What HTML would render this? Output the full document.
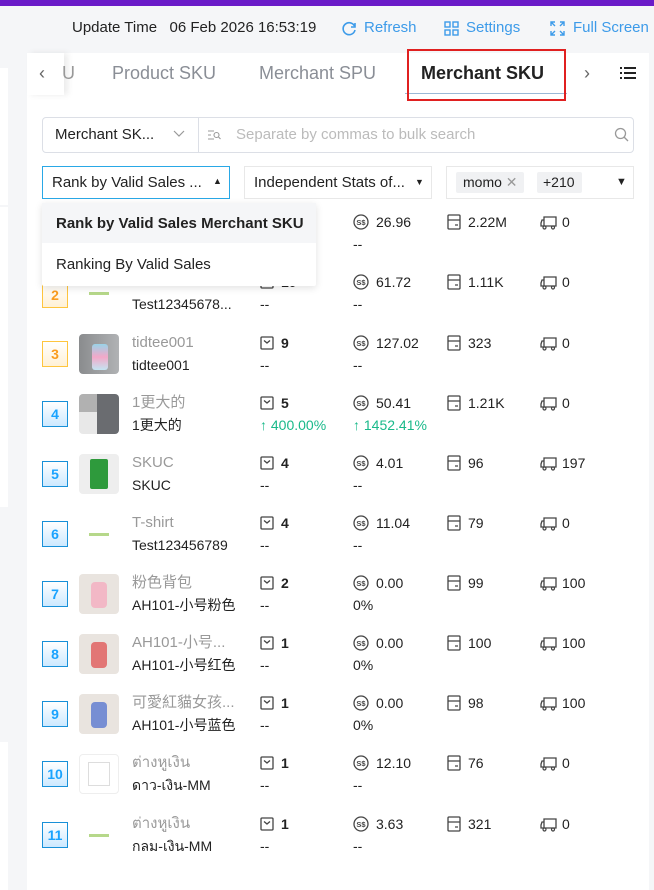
<!DOCTYPE html>
<html><head><meta charset="utf-8"><style>
*{box-sizing:border-box;margin:0;padding:0}
body{width:654px;height:890px;overflow:hidden;background:#f5f6f8;font-family:"Liberation Sans","Noto Sans CJK SC",sans-serif;font-size:14px;color:#222;position:relative}
.a{position:absolute;white-space:nowrap}
.blue{color:#3d9be9}
.rk{position:absolute;left:42px;width:26px;height:26px;border:1px solid;text-align:center;line-height:24px;font-weight:bold;font-size:14px}
.o{border-color:#ffc53d;color:#fa9c1e;background:linear-gradient(#fff,#fff1d6)}
.b{border-color:#1890d8;color:#1aa3ff;background:linear-gradient(#fff,#cde9ff)}
.img{position:absolute;left:79px;width:40px;height:40px;border-radius:4px;overflow:hidden}
.t{position:absolute;line-height:18px;white-space:nowrap;font-size:14px}
.gr{color:#999;font-size:15px}
.bd{font-weight:bold}
.g{color:#19b98a}
.ic{position:absolute}
</style></head><body>
<div class="a" style="left:0;top:0;width:654px;height:6px;background:#6a1bc8"></div>
<div class="a" style="left:0;top:68px;width:8px;height:137px;background:#fff"></div>
<div class="a" style="left:0;top:207px;width:8px;height:300px;background:#fff"></div>
<div class="a" style="left:0;top:742px;width:8px;height:148px;background:#fff"></div>
<div class="a" style="left:72px;top:19px;font-size:15px">Update Time&nbsp;&nbsp;&nbsp;06 Feb 2026 16:53:19</div>
<svg class="a" style="left:341px;top:21px" width="16" height="16" viewBox="0 0 16 16"><path d="M13.5 5A6 6 0 1 0 14 9" fill="none" stroke="#3d9be9" stroke-width="1.6"/><path d="M14 2v4h-4" fill="none" stroke="#3d9be9" stroke-width="1.6"/></svg>
<div class="a blue" style="left:364px;top:19px;font-size:15px">Refresh</div>
<svg class="a" style="left:444px;top:21px" width="15" height="15" viewBox="0 0 15 15" fill="none" stroke="#3d9be9" stroke-width="1.4"><rect x="1" y="1" width="5" height="5"/><rect x="9" y="1" width="5" height="5"/><rect x="1" y="9" width="5" height="5"/><rect x="9" y="9" width="5" height="5"/></svg>
<div class="a blue" style="left:466px;top:19px;font-size:15px">Settings</div>
<svg class="a" style="left:550px;top:21px" width="15" height="15" viewBox="0 0 15 15" fill="none" stroke="#3d9be9" stroke-width="1.4"><path d="M1 5V1h4M10 1h4v4M14 10v4h-4M5 14H1v-4M1 1l4 4M14 1l-4 4M14 14l-4-4M1 14l4-4"/></svg>
<div class="a blue" style="left:573px;top:19px;font-size:15px">Full Screen</div>
<div class="a" style="left:27px;top:53px;width:622px;height:837px;background:#fff"></div>
<div class="a" style="left:27px;top:53px;width:37px;height:42px;background:#fff;box-shadow:4px 0 6px rgba(0,0,0,.08)"></div>
<div class="a" style="left:39px;top:63px;color:#666;font-size:18px">&lsaquo;</div>
<div class="a" style="left:62px;top:63px;color:#999;font-size:18px">U</div>
<div class="a" style="left:112px;top:63px;color:#8a8e96;font-size:18px">Product SKU</div>
<div class="a" style="left:259px;top:63px;color:#8a8e96;font-size:18px">Merchant SPU</div>
<div class="a" style="left:421px;top:63px;color:#222;font-size:18px;font-weight:bold">Merchant SKU</div>
<div class="a" style="left:405px;top:93px;width:162px;height:1px;background:#9bb8d6"></div>
<div class="a" style="left:407px;top:49px;width:159px;height:52px;border:2px solid #e02020"></div>
<div class="a" style="left:584px;top:63px;color:#666;font-size:18px">&rsaquo;</div>
<svg class="a" style="left:620px;top:66px" width="16" height="14" viewBox="0 0 16 14"><g fill="#222"><rect x="0" y="1" width="2" height="2"/><rect x="0" y="6" width="2" height="2"/><rect x="0" y="11" width="2" height="2"/><rect x="4" y="1" width="12" height="2"/><rect x="4" y="6" width="12" height="2"/><rect x="4" y="11" width="12" height="2"/></g></svg>
<div class="a" style="left:42px;top:117px;width:592px;height:36px;border:1px solid #dcdfe6;border-radius:4px"></div>
<div class="a" style="left:198px;top:117px;width:1px;height:36px;background:#dcdfe6"></div>
<div class="a" style="left:55px;top:126px;font-size:15px">Merchant SK...</div>
<svg class="a" style="left:173px;top:130px" width="12" height="8" viewBox="0 0 12 8"><path d="M1 1l5 5 5-5" fill="none" stroke="#999" stroke-width="1.2"/></svg>
<svg class="a" style="left:208px;top:129px" width="13" height="12" viewBox="0 0 13 12" fill="none" stroke="#999" stroke-width="1.1"><path d="M0 2h6M0 6h3M0 10h6"/><circle cx="8.5" cy="6" r="2.5"/><path d="M10.5 8l2 2"/></svg>
<div class="a" style="left:236px;top:126px;color:#bbb;font-size:15px">Separate by commas to bulk search</div>
<svg class="a" style="left:614px;top:127px" width="15" height="15" viewBox="0 0 15 15" fill="none" stroke="#999" stroke-width="1.3"><circle cx="6.5" cy="6.5" r="5"/><path d="M10 10l4 4"/></svg>
<div class="a" style="left:42px;top:166px;width:188px;height:33px;border:1px solid #29a8e6"></div>
<div class="a" style="left:52px;top:174px;font-size:15px">Rank by Valid Sales ...</div>
<div class="a" style="left:213px;top:176px;font-size:9px">&#9650;</div>
<div class="a" style="left:244px;top:166px;width:188px;height:33px;border:1px solid #e8e8e8"></div>
<div class="a" style="left:254px;top:174px;font-size:15px">Independent Stats of...</div>
<div class="a" style="left:415px;top:177px;font-size:9px">&#9660;</div>
<div class="a" style="left:446px;top:166px;width:188px;height:33px;border:1px solid #e8e8e8"></div>
<div class="a" style="left:456px;top:172px;width:68px;height:21px;background:#f0f1f3;border-radius:2px"></div>
<div class="a" style="left:463px;top:174px;font-size:14px">momo <span style="color:#999">✕</span></div>
<div class="a" style="left:537px;top:172px;width:45px;height:21px;background:#f0f1f3;border-radius:2px"></div>
<div class="a" style="left:543px;top:174px;font-size:14px">+210</div>
<div class="a" style="left:616px;top:176px;font-size:11px">&#9660;</div>

<svg width="0" height="0" style="position:absolute"><defs>
<symbol id="bag" viewBox="0 0 14 14"><rect x="1" y="1" width="12" height="12" rx="1" fill="none" stroke="#444" stroke-width="1.3"/><path d="M4 4.5l3 2.5 3-2.5" fill="none" stroke="#444" stroke-width="1.3"/></symbol>
<symbol id="coin" viewBox="0 0 16 16"><circle cx="8" cy="8" r="7" fill="none" stroke="#444" stroke-width="1.3"/><text x="8" y="11" font-size="7.5" text-anchor="middle" font-family="Liberation Sans" fill="#444" font-weight="bold">S$</text></symbol>
<symbol id="box" viewBox="0 0 14 16"><rect x="1" y="1" width="12" height="14" rx="1" fill="none" stroke="#444" stroke-width="1.3"/><path d="M1 6h12M8 11h3" stroke="#444" stroke-width="1.3"/></symbol>
<symbol id="truck" viewBox="0 0 17 15"><path d="M4 2h12v9H4zM4 5H2L1 8v3h3" fill="none" stroke="#444" stroke-width="1.3"/><circle cx="4.5" cy="12.5" r="1.5" fill="#fff" stroke="#444" stroke-width="1.2"/><circle cx="13" cy="12.5" r="1.5" fill="#fff" stroke="#444" stroke-width="1.2"/></symbol>
</defs></svg>

<svg class="ic" style="left:353px;top:214px" width="16" height="16"><use href="#coin"/></svg><div class="t" style="left:376px;top:213px">26.96</div>
<svg class="ic" style="left:447px;top:214px" width="14" height="16"><use href="#box"/></svg><div class="t" style="left:468px;top:213px">2.22M</div>
<svg class="ic" style="left:540px;top:215px" width="17" height="15"><use href="#truck"/></svg><div class="t" style="left:562px;top:213px">0</div>
<div class="t" style="left:353px;top:235px">--</div>

<div class="rk o" style="top:282px">2</div>
<div class="img" style="top:273px"><div style="position:absolute;left:10px;top:19px;width:20px;height:3px;background:#b6d88a"></div></div>
<div class="t gr" style="left:132px;top:273px">Test</div>
<div class="t" style="left:132px;top:295px">Test12345678...</div>
<svg class="ic" style="left:260px;top:275px" width="14" height="14"><use href="#bag"/></svg><div class="t bd" style="left:281px;top:273px">10</div>
<div class="t" style="left:260px;top:295px">--</div>
<svg class="ic" style="left:353px;top:274px" width="16" height="16"><use href="#coin"/></svg><div class="t" style="left:376px;top:273px">61.72</div>
<div class="t" style="left:353px;top:295px">--</div>
<svg class="ic" style="left:447px;top:274px" width="14" height="16"><use href="#box"/></svg><div class="t" style="left:468px;top:273px">1.11K</div>
<svg class="ic" style="left:540px;top:275px" width="17" height="15"><use href="#truck"/></svg><div class="t" style="left:562px;top:273px">0</div>

<div class="rk o" style="top:341px">3</div>
<div class="img" style="top:334px;background:linear-gradient(90deg,#8a8c8e,#b0b2b4)"><div style="position:absolute;left:13px;top:10px;width:16px;height:26px;background:linear-gradient(#9ad3e8,#f3a8c8,#c3e4f2);border-radius:3px"></div></div>
<div class="t gr" style="left:132px;top:334px">tidtee001</div>
<div class="t" style="left:132px;top:356px">tidtee001</div>
<svg class="ic" style="left:260px;top:336px" width="14" height="14"><use href="#bag"/></svg><div class="t bd" style="left:281px;top:334px">9</div>
<div class="t" style="left:260px;top:356px">--</div>
<svg class="ic" style="left:353px;top:335px" width="16" height="16"><use href="#coin"/></svg><div class="t" style="left:376px;top:334px">127.02</div>
<div class="t" style="left:353px;top:356px">--</div>
<svg class="ic" style="left:447px;top:335px" width="14" height="16"><use href="#box"/></svg><div class="t" style="left:468px;top:334px">323</div>
<svg class="ic" style="left:540px;top:336px" width="17" height="15"><use href="#truck"/></svg><div class="t" style="left:562px;top:334px">0</div>

<div class="rk b" style="top:401px">4</div>
<div class="img" style="top:394px;background:linear-gradient(90deg,#e8e8e8 45%,#6a6c70 45%)"><div style="position:absolute;left:0;top:0;width:18px;height:18px;background:#333;opacity:.3"></div></div>
<div class="t gr" style="left:132px;top:394px">1更大的</div>
<div class="t" style="left:132px;top:416px">1更大的</div>
<svg class="ic" style="left:260px;top:396px" width="14" height="14"><use href="#bag"/></svg><div class="t bd" style="left:281px;top:394px">5</div>
<div class="t g" style="left:260px;top:416px">↑ 400.00%</div>
<svg class="ic" style="left:353px;top:395px" width="16" height="16"><use href="#coin"/></svg><div class="t" style="left:376px;top:394px">50.41</div>
<div class="t g" style="left:353px;top:416px">↑ 1452.41%</div>
<svg class="ic" style="left:447px;top:395px" width="14" height="16"><use href="#box"/></svg><div class="t" style="left:468px;top:394px">1.21K</div>
<svg class="ic" style="left:540px;top:396px" width="17" height="15"><use href="#truck"/></svg><div class="t" style="left:562px;top:394px">0</div>

<div class="rk b" style="top:461px">5</div>
<div class="img" style="top:454px;background:#eee"><div style="position:absolute;left:11px;top:5px;width:18px;height:30px;background:#2e9a3c;border-radius:2px"></div></div>
<div class="t gr" style="left:132px;top:454px">SKUC</div>
<div class="t" style="left:132px;top:476px">SKUC</div>
<svg class="ic" style="left:260px;top:456px" width="14" height="14"><use href="#bag"/></svg><div class="t bd" style="left:281px;top:454px">4</div>
<div class="t" style="left:260px;top:476px">--</div>
<svg class="ic" style="left:353px;top:455px" width="16" height="16"><use href="#coin"/></svg><div class="t" style="left:376px;top:454px">4.01</div>
<div class="t" style="left:353px;top:476px">--</div>
<svg class="ic" style="left:447px;top:455px" width="14" height="16"><use href="#box"/></svg><div class="t" style="left:468px;top:454px">96</div>
<svg class="ic" style="left:540px;top:456px" width="17" height="15"><use href="#truck"/></svg><div class="t" style="left:562px;top:454px">197</div>

<div class="rk b" style="top:521px">6</div>
<div class="img" style="top:514px"><div style="position:absolute;left:10px;top:19px;width:20px;height:3px;background:#b6d88a"></div></div>
<div class="t gr" style="left:132px;top:514px">T-shirt</div>
<div class="t" style="left:132px;top:536px">Test123456789</div>
<svg class="ic" style="left:260px;top:516px" width="14" height="14"><use href="#bag"/></svg><div class="t bd" style="left:281px;top:514px">4</div>
<div class="t" style="left:260px;top:536px">--</div>
<svg class="ic" style="left:353px;top:515px" width="16" height="16"><use href="#coin"/></svg><div class="t" style="left:376px;top:514px">11.04</div>
<div class="t" style="left:353px;top:536px">--</div>
<svg class="ic" style="left:447px;top:515px" width="14" height="16"><use href="#box"/></svg><div class="t" style="left:468px;top:514px">79</div>
<svg class="ic" style="left:540px;top:516px" width="17" height="15"><use href="#truck"/></svg><div class="t" style="left:562px;top:514px">0</div>

<div class="rk b" style="top:581px">7</div>
<div class="img" style="top:574px;background:#e9e4df"><div style="position:absolute;left:12px;top:8px;width:16px;height:26px;background:#f2b8c6;border-radius:4px"></div></div>
<div class="t gr" style="left:132px;top:574px">粉色背包</div>
<div class="t" style="left:132px;top:596px">AH101-小号粉色</div>
<svg class="ic" style="left:260px;top:576px" width="14" height="14"><use href="#bag"/></svg><div class="t bd" style="left:281px;top:574px">2</div>
<div class="t" style="left:260px;top:596px">--</div>
<svg class="ic" style="left:353px;top:575px" width="16" height="16"><use href="#coin"/></svg><div class="t" style="left:376px;top:574px">0.00</div>
<div class="t" style="left:353px;top:596px">0%</div>
<svg class="ic" style="left:447px;top:575px" width="14" height="16"><use href="#box"/></svg><div class="t" style="left:468px;top:574px">99</div>
<svg class="ic" style="left:540px;top:576px" width="17" height="15"><use href="#truck"/></svg><div class="t" style="left:562px;top:574px">100</div>

<div class="rk b" style="top:641px">8</div>
<div class="img" style="top:634px;background:#e9e4df"><div style="position:absolute;left:12px;top:8px;width:16px;height:26px;background:#e05a5a;border-radius:4px;opacity:.8"></div></div>
<div class="t gr" style="left:132px;top:634px">AH101-小号...</div>
<div class="t" style="left:132px;top:656px">AH101-小号红色</div>
<svg class="ic" style="left:260px;top:636px" width="14" height="14"><use href="#bag"/></svg><div class="t bd" style="left:281px;top:634px">1</div>
<div class="t" style="left:260px;top:656px">--</div>
<svg class="ic" style="left:353px;top:635px" width="16" height="16"><use href="#coin"/></svg><div class="t" style="left:376px;top:634px">0.00</div>
<div class="t" style="left:353px;top:656px">0%</div>
<svg class="ic" style="left:447px;top:635px" width="14" height="16"><use href="#box"/></svg><div class="t" style="left:468px;top:634px">100</div>
<svg class="ic" style="left:540px;top:636px" width="17" height="15"><use href="#truck"/></svg><div class="t" style="left:562px;top:634px">100</div>

<div class="rk b" style="top:701px">9</div>
<div class="img" style="top:694px;background:#e9e4df"><div style="position:absolute;left:12px;top:8px;width:16px;height:26px;background:#5a78d0;border-radius:4px;opacity:.8"></div></div>
<div class="t gr" style="left:132px;top:694px">可愛紅貓女孩...</div>
<div class="t" style="left:132px;top:716px">AH101-小号蓝色</div>
<svg class="ic" style="left:260px;top:696px" width="14" height="14"><use href="#bag"/></svg><div class="t bd" style="left:281px;top:694px">1</div>
<div class="t" style="left:260px;top:716px">--</div>
<svg class="ic" style="left:353px;top:695px" width="16" height="16"><use href="#coin"/></svg><div class="t" style="left:376px;top:694px">0.00</div>
<div class="t" style="left:353px;top:716px">0%</div>
<svg class="ic" style="left:447px;top:695px" width="14" height="16"><use href="#box"/></svg><div class="t" style="left:468px;top:694px">98</div>
<svg class="ic" style="left:540px;top:696px" width="17" height="15"><use href="#truck"/></svg><div class="t" style="left:562px;top:694px">100</div>

<div class="rk b" style="top:761px">10</div>
<div class="img" style="top:754px;border:1px solid #eee"><div style="position:absolute;left:8px;top:7px;width:22px;height:24px;border:1px solid #ddd"></div></div>
<div class="t gr" style="left:132px;top:754px">ต่างหูเงิน</div>
<div class="t" style="left:132px;top:776px">ดาว-เงิน-MM</div>
<svg class="ic" style="left:260px;top:756px" width="14" height="14"><use href="#bag"/></svg><div class="t bd" style="left:281px;top:754px">1</div>
<div class="t" style="left:260px;top:776px">--</div>
<svg class="ic" style="left:353px;top:755px" width="16" height="16"><use href="#coin"/></svg><div class="t" style="left:376px;top:754px">12.10</div>
<div class="t" style="left:353px;top:776px">--</div>
<svg class="ic" style="left:447px;top:755px" width="14" height="16"><use href="#box"/></svg><div class="t" style="left:468px;top:754px">76</div>
<svg class="ic" style="left:540px;top:756px" width="17" height="15"><use href="#truck"/></svg><div class="t" style="left:562px;top:754px">0</div>

<div class="rk b" style="top:822px">11</div>
<div class="img" style="top:815px"><div style="position:absolute;left:10px;top:19px;width:20px;height:3px;background:#b6d88a"></div></div>
<div class="t gr" style="left:132px;top:815px">ต่างหูเงิน</div>
<div class="t" style="left:132px;top:837px">กลม-เงิน-MM</div>
<svg class="ic" style="left:260px;top:817px" width="14" height="14"><use href="#bag"/></svg><div class="t bd" style="left:281px;top:815px">1</div>
<div class="t" style="left:260px;top:837px">--</div>
<svg class="ic" style="left:353px;top:816px" width="16" height="16"><use href="#coin"/></svg><div class="t" style="left:376px;top:815px">3.63</div>
<div class="t" style="left:353px;top:837px">--</div>
<svg class="ic" style="left:447px;top:816px" width="14" height="16"><use href="#box"/></svg><div class="t" style="left:468px;top:815px">321</div>
<svg class="ic" style="left:540px;top:817px" width="17" height="15"><use href="#truck"/></svg><div class="t" style="left:562px;top:815px">0</div>

<div class="a" style="left:42px;top:203px;width:274px;height:83px;background:#fff;box-shadow:0 2px 8px rgba(0,0,0,.12);border-radius:2px"></div>
<div class="a" style="left:42px;top:203px;width:274px;height:40px;background:#f5f6f8"></div>
<div class="a" style="left:56px;top:215px;font-size:15px;font-weight:bold">Rank by Valid Sales Merchant SKU</div>
<div class="a" style="left:56px;top:256px;font-size:15px">Ranking By Valid Sales</div>
</body></html>
